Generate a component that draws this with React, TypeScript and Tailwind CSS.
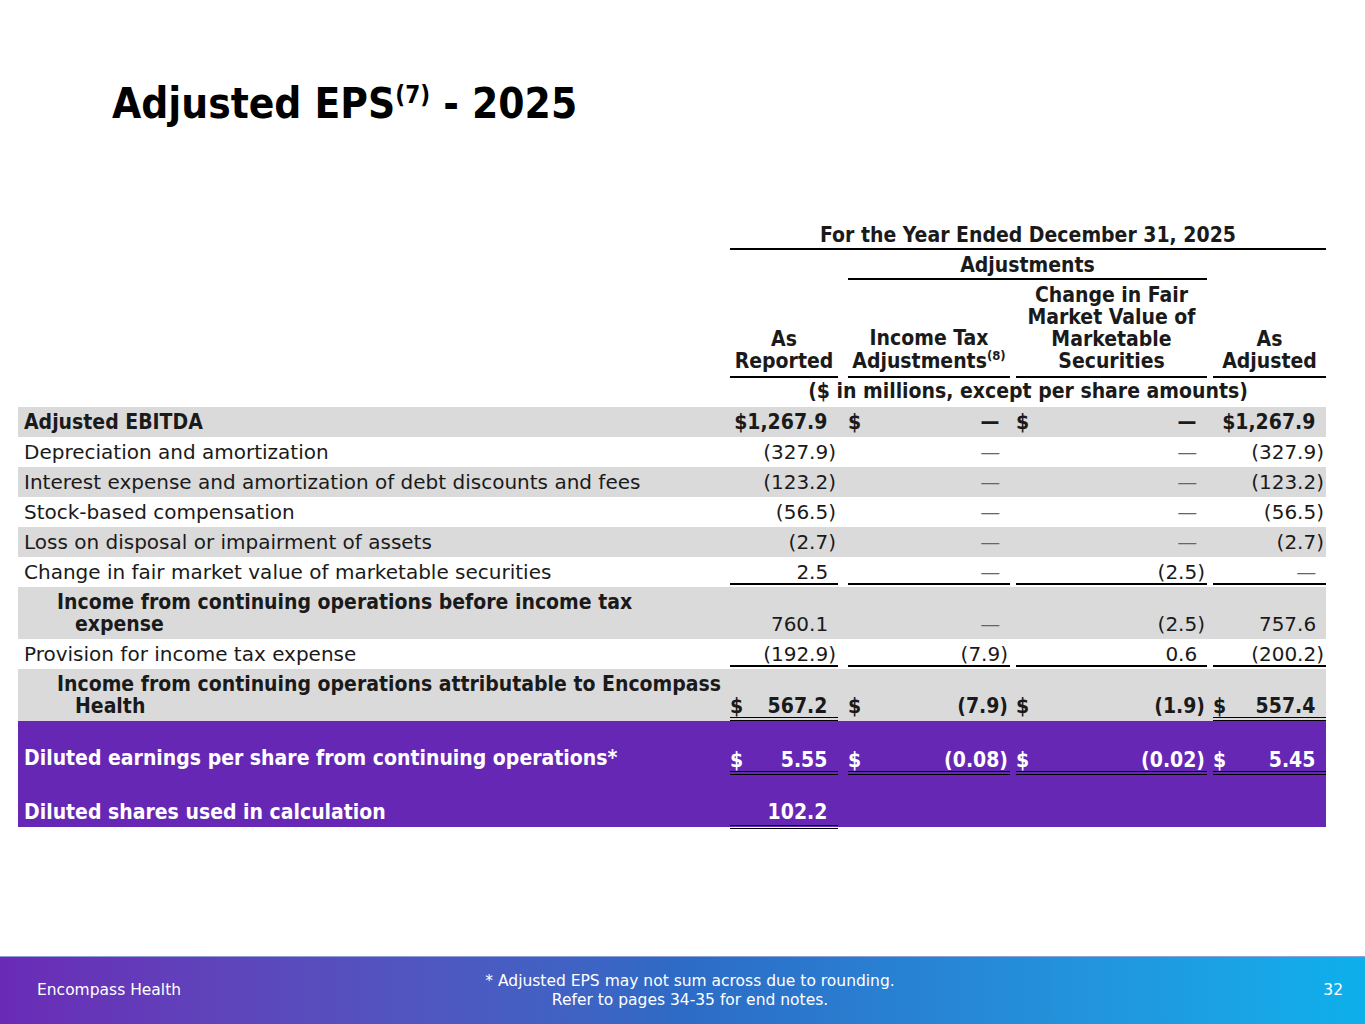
import React from "react";

type Cell = { v?: string; d?: boolean; u?: "s" | "d" };
type Row = {
  label: string;
  two?: boolean;
  bold?: boolean;
  bg: "gray" | "white";
  cells: Cell[];
};

// bold text in the slide is a narrow face, regular text is wider
const B = "font-bold font-['DejaVu_Sans_Condensed',sans-serif] [font-stretch:condensed] text-[21px]";

const rows: Row[] = [
  {
    label: "Adjusted EBITDA",
    bold: true,
    bg: "gray",
    cells: [{ v: "$1,267.9" }, { v: "—", d: true }, { v: "—", d: true }, { v: "$1,267.9" }],
  },
  { label: "Depreciation and amortization", bg: "white", cells: [{ v: "(327.9)" }, { v: "—" }, { v: "—" }, { v: "(327.9)" }] },
  {
    label: "Interest expense and amortization of debt discounts and fees",
    bg: "gray",
    cells: [{ v: "(123.2)" }, { v: "—" }, { v: "—" }, { v: "(123.2)" }],
  },
  { label: "Stock-based compensation", bg: "white", cells: [{ v: "(56.5)" }, { v: "—" }, { v: "—" }, { v: "(56.5)" }] },
  { label: "Loss on disposal or impairment of assets", bg: "gray", cells: [{ v: "(2.7)" }, { v: "—" }, { v: "—" }, { v: "(2.7)" }] },
  {
    label: "Change in fair market value of marketable securities",
    bg: "white",
    cells: [
      { v: "2.5", u: "s" },
      { v: "—", u: "s" },
      { v: "(2.5)", u: "s" },
      { v: "—", u: "s" },
    ],
  },
  {
    label: "Income from continuing operations before income tax expense",
    two: true,
    bold: true,
    bg: "gray",
    cells: [{ v: "760.1" }, { v: "—" }, { v: "(2.5)" }, { v: "757.6" }],
  },
  {
    label: "Provision for income tax expense",
    bg: "white",
    cells: [
      { v: "(192.9)", u: "s" },
      { v: "(7.9)", u: "s" },
      { v: "0.6", u: "s" },
      { v: "(200.2)", u: "s" },
    ],
  },
];

const colBox = [
  "ml-[6px] mr-[4px]",
  "ml-[6px] mr-[3px]",
  "ml-[3px] mr-[3px]",
  "ml-[3px] mr-0",
];

function Num({ v, d, u, bold }: Cell & { bold?: boolean }) {
  const paren = v?.endsWith(")");
  const dash = v === "—";
  const line =
    u === "s"
      ? "border-b-[2px] border-black"
      : u === "d"
        ? "border-b-[4px] border-double border-black"
        : "border-b-[2px] border-transparent";
  return (
    <div className={`flex items-end justify-between ${line} ${bold ? B : ""}`}>
      <span>{d ? "$" : ""}</span>
      <span className={`pr-[2px] ${dash && !bold ? "text-[#666]" : ""}`}>
        {v}
        {!paren && <span className="invisible">)</span>}
      </span>
    </div>
  );
}

function DollarNum({ v, u }: { v: string; u?: "s" | "d" }) {
  const paren = v.endsWith(")");
  const line = u === "d" ? "border-b-[4px] border-double border-black" : "border-b-[4px] border-transparent";
  return (
    <div className={`flex items-end justify-between ${line} ${B}`}>
      <span>$</span>
      <span className="pr-[2px]">
        {v}
        {!paren && <span className="invisible">)</span>}
      </span>
    </div>
  );
}

const grid = "grid grid-cols-[706px_118px_171px_197px_116px]";

export default function App() {
  return (
    <div
      className="relative w-[1365px] h-[1024px] bg-white text-[#1a1a1a] overflow-hidden flex flex-col"
      style={{ fontFamily: '"DejaVu Sans", sans-serif' }}
    >
      <h1 className="ml-[112px] mt-[76px] text-[42px] font-bold leading-[56px] text-black font-['DejaVu_Sans_Condensed',sans-serif] [font-stretch:condensed]">
        Adjusted EPS<span className="text-[24px] align-super leading-none">(7)</span> - 2025
      </h1>

      <div className="ml-[18px] mt-[92px] w-[1308px] text-[20px] leading-[22px]">
        {/* header */}
        <div className={`${grid} ${B}`}>
          <div />
          <div className="col-span-4 text-center border-b-[2px] border-black pb-[2px] ml-[6px]">
            For the Year Ended December 31, 2025
          </div>
        </div>
        <div className={`${grid} ${B} mt-[4px]`}>
          <div />
          <div />
          <div className="col-span-2 text-center border-b-[2px] border-black ml-[6px] mr-[3px] pb-[2px]">
            Adjustments
          </div>
          <div />
        </div>
        <div className={`${grid} ${B} mt-[4px] items-end text-center`}>
          <div />
          <div className={`${colBox[0]} border-b-[2px] border-black pb-[4px]`}>
            As
            <br />
            Reported
          </div>
          <div className={`${colBox[1]} border-b-[2px] border-black pb-[4px]`}>
            Income Tax
            <br />
            Adjustments<span className="text-[13px] align-super leading-none">(8)</span>
          </div>
          <div className={`${colBox[2]} border-b-[2px] border-black pb-[4px]`}>
            Change in Fair
            <br />
            Market Value of
            <br />
            Marketable
            <br />
            Securities
          </div>
          <div className={`${colBox[3]} border-b-[2px] border-black pb-[4px]`}>
            As
            <br />
            Adjusted
          </div>
        </div>
        <div className={`${grid} ${B} pt-[2px] pb-[5px]`}>
          <div />
          <div className="col-span-4 text-center ml-[6px]">($ in millions, except per share amounts)</div>
        </div>

        {/* body */}
        {rows.map((r, i) => (
          <div key={i} className={`${grid} items-end ${r.bg === "gray" ? "bg-[#dadada]" : "bg-white"}`}>
            <div
              className={`pt-[4px] pb-[4px] ${r.bold ? B : ""} ${
                r.two ? "pl-[57px] -indent-[18px] pr-[4px]" : "pl-[6px]"
              }`}
            >
              {r.label}
            </div>
            {r.cells.map((c, j) => (
              <div key={j} className={`${colBox[j]} pb-[2px]`}>
                <Num {...c} bold={r.bold && !r.two} />
              </div>
            ))}
          </div>
        ))}

        {/* attributable */}
        <div className={`${grid} items-end bg-[#dadada]`}>
          <div className={`pt-[4px] pb-[4px] ${B} pl-[57px] -indent-[18px] pr-[2px] -mr-[8px]`}>
            Income from continuing operations attributable to Encompass Health
          </div>
          <div className={colBox[0]}>
            <DollarNum v="567.2" u="d" />
          </div>
          <div className={colBox[1]}>
            <DollarNum v="(7.9)" />
          </div>
          <div className={colBox[2]}>
            <DollarNum v="(1.9)" />
          </div>
          <div className={colBox[3]}>
            <DollarNum v="557.4" u="d" />
          </div>
        </div>

        {/* purple block */}
        <div className={`bg-[#6727b5] text-white ${B}`}>
          <div className={`${grid} items-end pt-[26px]`}>
            <div className="pl-[6px] pb-[6px]">Diluted earnings per share from continuing operations*</div>
            <div className={colBox[0]}>
              <DollarNum v="5.55" u="d" />
            </div>
            <div className={colBox[1]}>
              <DollarNum v="(0.08)" u="d" />
            </div>
            <div className={colBox[2]}>
              <DollarNum v="(0.02)" u="d" />
            </div>
            <div className={colBox[3]}>
              <DollarNum v="5.45" u="d" />
            </div>
          </div>
          <div className={`${grid} items-end pt-[24px] h-[52px]`}>
            <div className="pl-[6px] pb-[4px]">Diluted shares used in calculation</div>
            <div className={`${colBox[0]} pb-[4px]`}>
              <div className="text-right pr-[2px]">
                102.2<span className="invisible">)</span>
              </div>
            </div>
            <div />
            <div />
            <div />
          </div>
        </div>
        <div className={grid}>
          <div />
          <div className={`${colBox[0]} border-t-[4px] border-double border-black -mt-[2px]`} />
        </div>
      </div>

      {/* footer */}
      <div className="mt-auto h-[68px] flex items-center justify-between pl-[37px] pr-[22px] text-white text-[15.5px] leading-[19px] bg-gradient-to-r from-[#6a2ab6] via-[#2d6bc6] to-[#0cb0ec] border-t border-[#8fa0d8]">
        <div className="w-[300px]">Encompass Health</div>
        <div className="text-center">
          <div>* Adjusted EPS may not sum across due to rounding.</div>
          <div>Refer to pages 34-35 for end notes.</div>
        </div>
        <div className="w-[300px] text-right">32</div>
      </div>
    </div>
  );
}
